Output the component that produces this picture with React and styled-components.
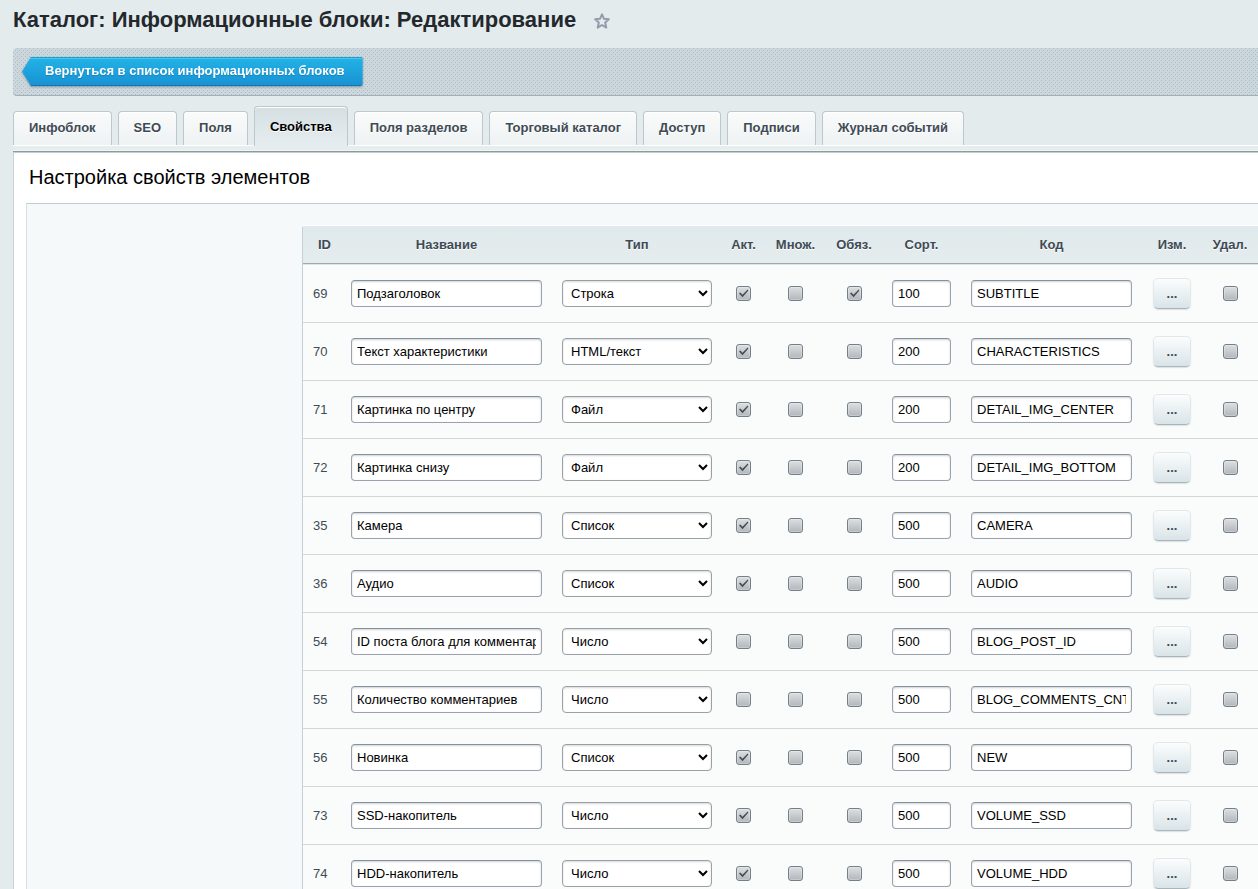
import React from "react";
import styled, { createGlobalStyle } from "styled-components";

const GlobalStyle = createGlobalStyle`
  * { box-sizing: border-box; }
  html { scrollbar-width: none; }
  body {
    margin: 0;
    background: #e3ebed;
    color: #3f4b54;
    font: 13px/16px "Liberation Sans", Arial, sans-serif;
  }
`;

const Page = styled.main`
  padding: 8px 0 0 13px;
  overflow: hidden;
`;

const TitleRow = styled.header`
  display: flex;
  align-items: center;
  gap: 16px;
  height: 24px;
`;

const Title = styled.h1`
  margin: 0;
  font-size: 22px;
  line-height: 24px;
  color: #23282c;
  white-space: nowrap;
`;

const StarButton = styled.button`
  display: flex;
  padding: 2px 0 0;
  border: 0;
  background: none;
`;

const Toolbar = styled.nav`
  display: flex;
  align-items: flex-start;
  height: 48px;
  margin-top: 16px;
  padding: 9px;
  border-radius: 4px 0 0 4px;
  border-bottom: 1px solid #a3afb5;
  background-color: #cbd7dc;
  background-image:
    conic-gradient(at 1px 1px, transparent 75%, #adbcc4 0),
    conic-gradient(at 1px 1px, transparent 75%, #adbcc4 0);
  background-size: 4px 4px;
  background-position: 0 0, 2px 2px;
`;

const BackLink = styled.a`
  display: block;
  filter: drop-shadow(0 1px 1px rgba(60, 85, 100, 0.5));
  color: #fff;
  font-weight: bold;
  text-decoration: none;
  white-space: nowrap;
  text-shadow: 0 1px 1px rgba(0, 70, 120, 0.3);

  span {
    display: block;
    padding: 0 18px 0 23px;
    line-height: 28px;
    height: 29px;
    border-radius: 0 3px 3px 0;
    border-bottom: 1px solid #1079b4;
    background: linear-gradient(#22b4e6, #1992d4);
    box-shadow: inset 0 1px #1b9fd0, inset 0 2px #45c8f0;
    clip-path: polygon(0 50%, 9px 0, 100% 0, 100% 100%, 9px 100%);
  }
`;

const Tabs = styled.div`
  display: flex;
  align-items: flex-end;
  gap: 6px;
  height: 39px;
  margin-top: 10px;
`;

const Tab = styled.button`
  height: 34px;
  padding: 0 15px 2px;
  border: 1px solid #bcc8cc;
  border-bottom: 0;
  border-radius: 4px 4px 0 0;
  background: linear-gradient(#fafbfb, #eef2f3);
  box-shadow: inset 0 1px #fff;
  color: #3f4b54;
  font: bold 13px/16px "Liberation Sans", Arial, sans-serif;
  text-shadow: 0 1px #fff;
  white-space: nowrap;

  &[aria-selected="true"] {
    position: relative;
    height: 40px;
    margin-bottom: -1px;
    padding: 1px 15px 0;
    background: linear-gradient(#d5dfe2, #e5edef);
    color: #000;
  }
`;

const TabStrip = styled.div`
  height: 8px;
  border-top: 1px solid #fff;
  border-bottom: 1px solid #c3cdd0;
  background: #e5edef;
  box-shadow: inset 0 -1px #8d9b9f, inset 0 -2px #f1f5f6;
`;

const Panel = styled.section`
  padding: 0 0 0 12px;
  border-left: 1px solid #c8d3d7;
  background: #fff;
`;

const PanelTitle = styled.h2`
  margin: 0;
  padding: 12px 3px 14px;
  color: #000;
  font-size: 20px;
  font-weight: normal;
  line-height: 24px;
`;

const PanelBody = styled.div`
  padding: 21px 0 21px 275px;
  border-top: 1px solid #c3ced2;
  border-left: 1px solid #d5e0e4;
  background: #f5f9fa;
`;

const Table = styled.table`
  width: 100%;
  table-layout: fixed;
  border-collapse: separate;
  border-spacing: 0;
  border-left: 1px solid #c5d0d4;
  border-radius: 4px 0 0 0;
  background: #fafcfc;
`;

const Col = styled.col`
  width: ${(p) => (p.$w ? p.$w + "px" : "auto")};
`;

const HeadCell = styled.th`
  height: 40px;
  padding: 0;
  border-top: 1px solid #fff;
  border-bottom: 1px solid #dfe5e6;
  background: linear-gradient(#e0e9eb, #e4ecee);
  box-shadow: inset 0 -1px #9fa9ab;
  color: #3f4b54;
  text-shadow: 0 1px #fff;

  &:first-child { padding-left: 5px; }
`;

const Cell = styled.td`
  height: 58px;
  padding: 0 10px;
  border-bottom: 1px solid #cfd9dc;
  text-align: ${(p) => (p.$center ? "center" : "left")};
  vertical-align: middle;
`;

const CheckCell = styled(Cell)`
  padding: 0;
`;

const TextInput = styled.input`
  display: block;
  width: 100%;
  height: 27px;
  padding: 0 5px;
  border: 1px solid #9aa3ad;
  border-top-color: #87919c;
  border-radius: 4px;
  background: #fff;
  box-shadow: inset 0 1px 2px rgba(90, 105, 115, 0.3);
  color: #000;
  font: 13px/16px "Liberation Sans", Arial, sans-serif;
`;

const Select = styled.select`
  display: block;
  width: 100%;
  height: 27px;
  padding: 0 0 0 4px;
  border: 1px solid #9aa0a3;
  border-radius: 4px;
  background: #fff;
  box-shadow: inset 0 1px 2px rgba(90, 105, 115, 0.25);
  color: #000;
  font: 13px/16px "Liberation Sans", Arial, sans-serif;
`;

const CheckLabel = styled.label`
  display: grid;
  justify-content: center;

  > * { grid-area: 1 / 1; }
  svg { pointer-events: none; visibility: hidden; }
  input:checked + svg { visibility: visible; }
`;

const CheckInput = styled.input`
  appearance: none;
  width: 15px;
  height: 15px;
  margin: 0;
  border: 1px solid #748087;
  border-radius: 3px;
  background: linear-gradient(#dcdfe2, #b2b7bb);
  box-shadow: inset 0 0 0 1px rgba(255, 255, 255, 0.25);
`;

const MoreButton = styled.button`
  width: 38px;
  height: 31px;
  padding: 0;
  vertical-align: middle;
  border: 1px solid #e2e8ea;
  border-bottom-color: #a9b5b9;
  border-radius: 5px;
  background: linear-gradient(#fbfdfd, #d9e4e8);
  box-shadow: 0 1px 1px rgba(100, 120, 130, 0.2);
  color: #3f4b54;
  font: bold 13px/16px "Liberation Sans", Arial, sans-serif;
`;

const TABS = [
  "Инфоблок", "SEO", "Поля", "Свойства", "Поля разделов",
  "Торговый каталог", "Доступ", "Подписи", "Журнал событий",
];

const COLUMNS = [
  ["ID", 38], ["Название", null], ["Тип", 170], ["Акт.", 43], ["Множ.", 61],
  ["Обяз.", 56], ["Сорт.", 79], ["Код", 181], ["Изм.", 60], ["Удал.", 56],
];

const TYPES = ["Строка", "Число", "Список", "Файл", "HTML/текст"];

const ROWS = [
  { id: 69, name: "Подзаголовок", type: "Строка", active: true, required: true, sort: 100, code: "SUBTITLE" },
  { id: 70, name: "Текст характеристики", type: "HTML/текст", active: true, sort: 200, code: "CHARACTERISTICS" },
  { id: 71, name: "Картинка по центру", type: "Файл", active: true, sort: 200, code: "DETAIL_IMG_CENTER" },
  { id: 72, name: "Картинка снизу", type: "Файл", active: true, sort: 200, code: "DETAIL_IMG_BOTTOM" },
  { id: 35, name: "Камера", type: "Список", active: true, sort: 500, code: "CAMERA" },
  { id: 36, name: "Аудио", type: "Список", active: true, sort: 500, code: "AUDIO" },
  { id: 54, name: "ID поста блога для комментариев", type: "Число", sort: 500, code: "BLOG_POST_ID" },
  { id: 55, name: "Количество комментариев", type: "Число", sort: 500, code: "BLOG_COMMENTS_CNT" },
  { id: 56, name: "Новинка", type: "Список", active: true, sort: 500, code: "NEW" },
  { id: 73, name: "SSD-накопитель", type: "Число", active: true, sort: 500, code: "VOLUME_SSD" },
  { id: 74, name: "HDD-накопитель", type: "Число", active: true, sort: 500, code: "VOLUME_HDD" },
];

function Check({ label, checked }) {
  return (
    <CheckLabel>
      <CheckInput type="checkbox" aria-label={label} defaultChecked={checked} />
      <svg width="15" height="15" viewBox="0 0 15 15" aria-hidden="true">
        <path d="M3 7.6 L4.4 6.6 L6.5 8.7 L11.6 3.6 L12.4 4.4 L6.6 11.2 Z" fill="#474d52" />
      </svg>
    </CheckLabel>
  );
}

function PropertyRow({ row }) {
  return (
    <tr>
      <Cell>{row.id}</Cell>
      <Cell><TextInput aria-label={`Название ${row.id}`} defaultValue={row.name} /></Cell>
      <Cell>
        <Select aria-label={`Тип ${row.id}`} defaultValue={row.type}>
          {TYPES.map((t) => <option key={t}>{t}</option>)}
        </Select>
      </Cell>
      <CheckCell><Check label={`Акт. ${row.id}`} checked={row.active} /></CheckCell>
      <CheckCell><Check label={`Множ. ${row.id}`} /></CheckCell>
      <CheckCell><Check label={`Обяз. ${row.id}`} checked={row.required} /></CheckCell>
      <Cell><TextInput aria-label={`Сорт. ${row.id}`} defaultValue={row.sort} /></Cell>
      <Cell><TextInput aria-label={`Код ${row.id}`} defaultValue={row.code} /></Cell>
      <Cell $center><MoreButton type="button" aria-label={`Изм. ${row.id}`}>...</MoreButton></Cell>
      <CheckCell><Check label={`Удал. ${row.id}`} /></CheckCell>
    </tr>
  );
}

export default function App() {
  return (
    <Page>
      <GlobalStyle />
      <TitleRow>
        <Title>Каталог: Информационные блоки: Редактирование</Title>
        <StarButton type="button" aria-label="Избранное">
          <svg width="20" height="20" viewBox="0 0 20 20" aria-hidden="true">
            <path
              d="M10 3.4 L12 7.8 L16.8 8.3 L13.2 11.6 L14.3 16.6 L10 14 L5.7 16.6 L6.8 11.6 L3.2 8.3 L8 7.8 Z"
              fill="none" stroke="#929cab" strokeWidth="2" strokeLinejoin="round"
            />
          </svg>
        </StarButton>
      </TitleRow>
      <Toolbar>
        <BackLink href="#list"><span>Вернуться в список информационных блоков</span></BackLink>
      </Toolbar>
      <Tabs role="tablist">
        {TABS.map((t) => (
          <Tab key={t} type="button" role="tab" aria-selected={t === "Свойства"}>
            {t}
          </Tab>
        ))}
      </Tabs>
      <TabStrip />
      <Panel>
        <PanelTitle>Настройка свойств элементов</PanelTitle>
        <PanelBody>
          <Table>
            <colgroup>
              {COLUMNS.map(([name, w]) => <Col key={name} $w={w} />)}
            </colgroup>
            <thead>
              <tr>{COLUMNS.map(([name]) => <HeadCell key={name} scope="col">{name}</HeadCell>)}</tr>
            </thead>
            <tbody>
              {ROWS.map((row) => <PropertyRow key={row.id} row={row} />)}
            </tbody>
          </Table>
        </PanelBody>
      </Panel>
    </Page>
  );
}
